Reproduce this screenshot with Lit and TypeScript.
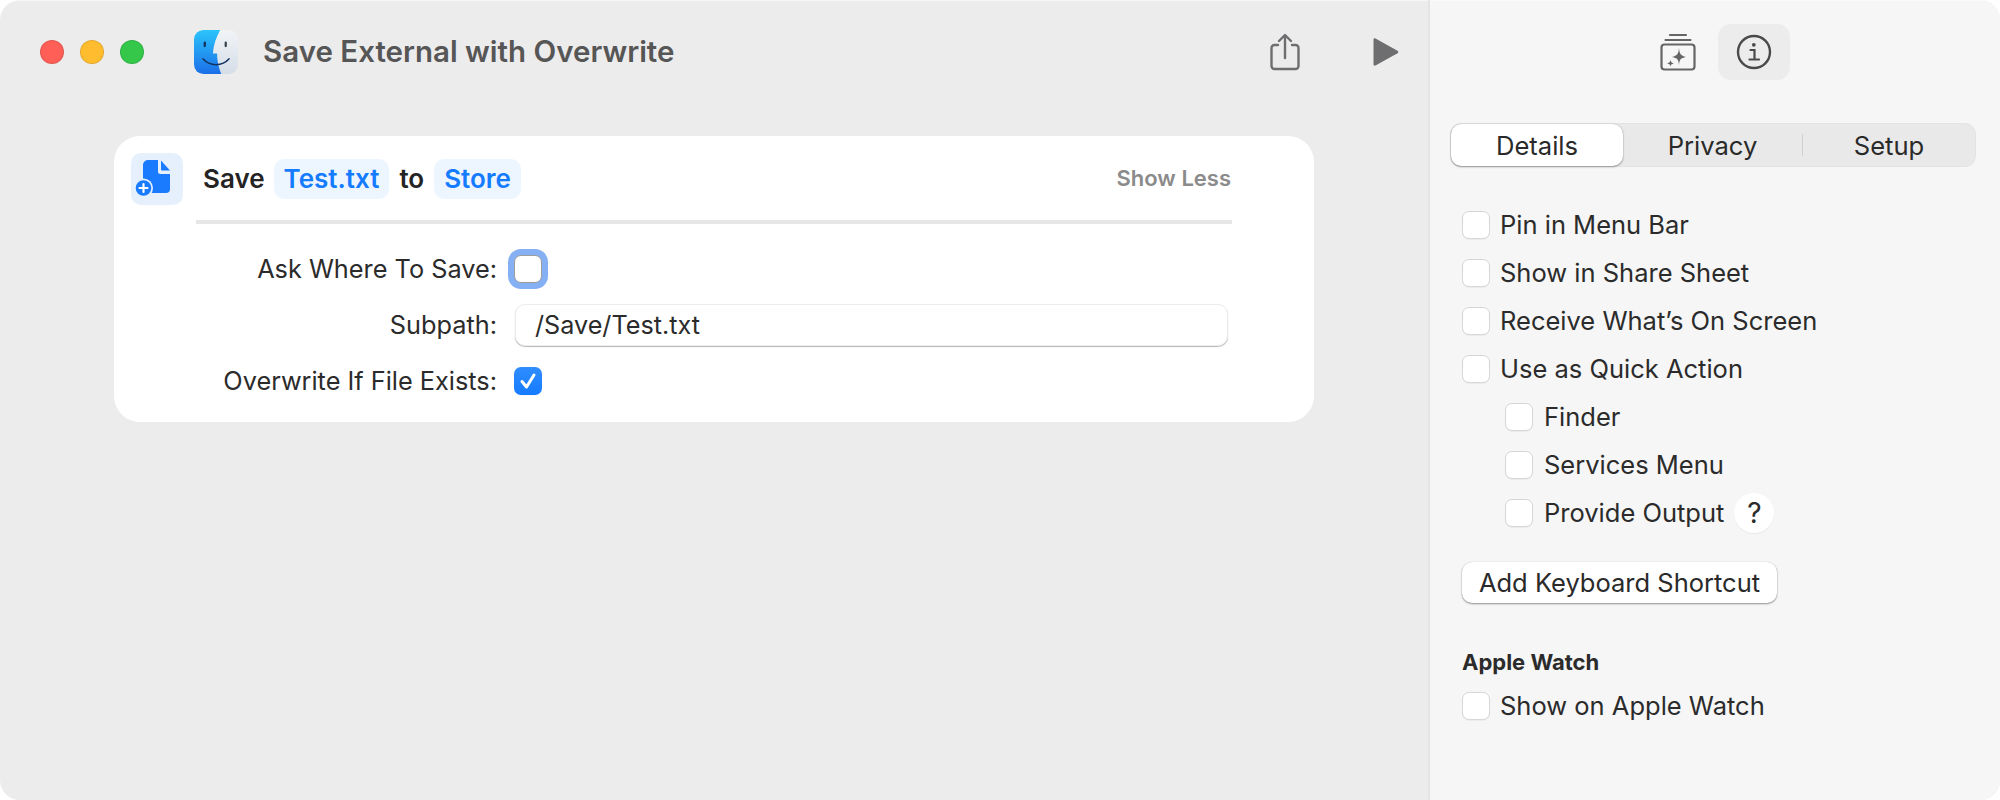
import { LitElement, html, css } from "lit";
import { customElement } from "lit/decorators.js";

@customElement("app-root")
export class AppRoot extends LitElement {
  static styles = css`
    :host { display: block; width: 2000px; height: 800px; background: #fff; font-family: Inter, "Liberation Sans", sans-serif; color: #2a2a2a; overflow: hidden; }
    * { box-sizing: border-box; }
    .window { display: flex; width: 2000px; height: 800px; border-radius: 20px; overflow: hidden; background: #ececec; box-shadow: inset 0 1px 0 #f6f6f6; }
    .main { flex: 0 0 1428px; display: flex; flex-direction: column; }
    .titlebar { height: 104px; flex: none; display: flex; align-items: center; padding: 0 29px 0 40px; }
    .lights { display: flex; gap: 16px; }
    .light { width: 24px; height: 24px; border-radius: 50%; border: 1px solid rgba(0,0,0,0.1); }
    .red { background: #ff5f57; } .yellow { background: #febc2e; } .green { background: #34c749; }
    .finder { margin-left: 50px; width: 44px; height: 44px; flex: none; }
    .title { margin-left: 25px; padding-bottom: 2px; font-size: 29.5px; font-weight: 600; color: #565656; flex: 1; }
    .tb-icon { display: block; flex: none; }
    .share { margin-right: 72px; margin-left: -2px; }
    .card { margin: 32px 0 0 114px; width: 1200px; height: 286px; background: #fff; border-radius: 26px; padding: 17px 65px 0 17px; }
    .head { display: flex; align-items: center; height: 52px; }
    .tile { width: 52px; height: 52px; border-radius: 10px; background: #e6f0fd; flex: none; display: block; }
    .phrase { margin-left: 20px; font-size: 26px; font-weight: 600; display: flex; align-items: center; flex: 1; color: #242424; }
    .pill { background: #edf5ff; color: #157bff; border-radius: 10px; height: 40px; padding: 0 10px 2px; display: flex; align-items: center; }
    .word { padding-bottom: 2px; }
    .first { margin-left: 9px; }
    .mid { margin: 0 10px; padding-bottom: 2px; }
    .less { font-size: 22px; font-weight: 600; color: #8b8b8b; margin-right: 18px; padding-bottom: 2px; }
    .rule { height: 4px; background: #e6e6e6; margin: 15px 0 24px 65px; width: 1036px; }
    .form { display: grid; grid-template-columns: 366px 714px; column-gap: 17px; grid-auto-rows: 42px; row-gap: 14px; align-items: center; }
    .lab { text-align: right; font-size: 25.3px; color: #2b2b2b; padding-bottom: 2px; }
    .input { height: 42px; margin-left: 1px; background: #fff; border-radius: 10px; border: 1px solid #ececec; box-shadow: 0 1px 1px rgba(0,0,0,0.28); font-size: 25.2px; padding-left: 19px; display: flex; align-items: center; color: #2b2b2b; }
    .cb { width: 28px; height: 28px; border-radius: 7px; background: #fff; border: 1px solid #d6d6d6; flex: none; box-shadow: 0 1px 0 rgba(0,0,0,0.04); display: block; }
    .cb.focus { margin-top: -1px; box-shadow: 0 0 0 6px #85b0f3; border-color: #9c9c9c; }
    .cb.on { background: linear-gradient(#2f8dff, #157bff); border: none; }
    .side { flex: 1; background: #f6f6f6; border-left: 2px solid #e4e4e4; padding: 24px 24px 0 20px; display: flex; flex-direction: column; box-shadow: inset 0 1px 0 #fbfbfb; }
    .side-tabs { display: flex; align-items: center; justify-content: center; height: 56px; padding-left: 24px; gap: 22px; }
    .sel { width: 72px; height: 56px; border-radius: 13px; background: #ececec; display: flex; align-items: center; justify-content: center; }
    .seg { margin-top: 43px; height: 44px; width: 526px; background: #e9e9e9; border-radius: 11px; display: flex; align-items: center; font-size: 25.6px; border: 1px solid #e3e3e3; position: relative; }
    .seg > div { display: flex; align-items: center; justify-content: center; height: 100%; }
    .seg .active { width: 172px; background: #fff; border-radius: 10px; box-shadow: 0 1px 2px rgba(0,0,0,0.35), 0 0 1px rgba(0,0,0,0.3); height: 42px; }
    .seg .p { width: 179px; }
    .seg .s { flex: 1; }
    .seg .sep { width: 1px; height: 22px; background: #d0d0d0; }
    .opts { margin-top: 34px; padding-left: 12px; display: flex; flex-direction: column; }
    .row { display: flex; align-items: center; height: 48px; font-size: 25.5px; color: #2b2b2b; }
    .row .cb { margin-right: 10px; }
    .row.in { padding-left: 43px; }
    .row.in .cb { margin-right: 11px; }
    .t { padding-bottom: 2px; }
    .help { width: 40px; height: 40px; border-radius: 50%; background: #fff; margin-left: 10px; display: flex; align-items: center; justify-content: center; font-size: 28px; box-shadow: 0 1px 1px rgba(0,0,0,0.06); }
    .btn { margin-top: 25px; height: 41px; width: 315px; background: #fff; border-radius: 10px; box-shadow: 0 1px 2px rgba(0,0,0,0.4), 0 0 1px rgba(0,0,0,0.2); font-size: 25.5px; display: flex; align-items: center; justify-content: center; }
    .h { margin-top: 46px; font-size: 22px; font-weight: 700; color: #2b2b2b; line-height: 26px; }
    .watch { margin-top: 7px; }
  `;

  private cb(cls = "") {
    return html`<span class="cb ${cls}"></span>`;
  }

  private row(label: string, indent = false) {
    return html`<div class="row ${indent ? "in" : ""}">${this.cb()}<span class="t">${label}</span></div>`;
  }

  render() {
    return html`
      <div class="window">
        <div class="main">
          <div class="titlebar">
            <div class="lights">
              <div class="light red"></div><div class="light yellow"></div><div class="light green"></div>
            </div>
            <svg class="finder" viewBox="0 0 42 42">
              <defs>
                <linearGradient id="fb" x1="0" y1="0" x2="0" y2="1"><stop offset="0" stop-color="#2bc4fb"/><stop offset="1" stop-color="#1b6fe8"/></linearGradient>
                <linearGradient id="fl" x1="0" y1="0" x2="0" y2="1"><stop offset="0" stop-color="#f2f4f6"/><stop offset="1" stop-color="#d4dde8"/></linearGradient>
                <clipPath id="fc"><rect x="0" y="0" width="42" height="42" rx="9"/></clipPath>
              </defs>
              <g clip-path="url(#fc)">
                <rect width="42" height="42" fill="url(#fl)"/>
                <path d="M0 0H25C21 7 18.5 15 18 22.5H22C22 29 23.5 36 26 42H0Z" fill="url(#fb)"/>
              </g>
              <rect x="9.2" y="11" width="2.2" height="5.4" rx="1.1" fill="#14325e"/>
              <rect x="29.2" y="11" width="2.2" height="5.4" rx="1.1" fill="#3a4650"/>
              <path d="M8.5 27.5C15 35 27 35 33.5 27.5" fill="none" stroke="#14325e" stroke-width="1.4" stroke-linecap="round"/>
            </svg>
            <div class="title">Save External with Overwrite</div>
            <svg class="tb-icon share" width="32" height="38" viewBox="0 0 32 38" fill="none" stroke="#6e6e70" stroke-width="2.4" stroke-linecap="round" stroke-linejoin="round">
              <path d="M9 12H5.5A3 3 0 0 0 2.5 15V33A3 3 0 0 0 5.5 36H26.5A3 3 0 0 0 29.5 33V15A3 3 0 0 0 26.5 12H23"/>
              <path d="M16 25V2.5M10 8L16 2L22 8"/>
            </svg>
            <svg class="tb-icon" width="26" height="30" viewBox="0 0 26 30"><path d="M2.5 1.5C1.3 1 0.5 1.8 0.5 3V27C0.5 28.2 1.3 29 2.5 28.5L24.5 16.2C25.6 15.5 25.6 14.5 24.5 13.8Z" fill="#6e6e70"/></svg>
          </div>
          <div class="card">
            <div class="head">
              <svg class="tile" viewBox="0 0 52 52">
                <path d="M17 7H27V18.5A2.5 2.5 0 0 0 29.5 21H39V36A4 4 0 0 1 35 40H16A4 4 0 0 1 12 36V12A5 5 0 0 1 17 7Z" fill="#1a7bff"/>
                <path d="M30 7.5L39 17.5H31A1 1 0 0 1 30 16.5Z" fill="#1a7bff"/>
                <circle cx="12.5" cy="35" r="9.5" fill="#e6f0fd"/>
                <circle cx="12.5" cy="35" r="7.8" fill="#1a7bff"/>
                <path d="M8.5 35H16.5M12.5 31V39" stroke="#fff" stroke-width="2.2" stroke-linecap="round"/>
              </svg>
              <div class="phrase">
                <span class="word">Save</span>
                <span class="pill first">Test.txt</span>
                <span class="mid">to</span>
                <span class="pill">Store</span>
              </div>
              <div class="less">Show Less</div>
            </div>
            <div class="rule"></div>
            <div class="form">
              <div class="lab">Ask Where To Save:</div>
              <div>${this.cb("focus")}</div>
              <div class="lab">Subpath:</div>
              <div class="input">/Save/Test.txt</div>
              <div class="lab">Overwrite If File Exists:</div>
              <div>
                <svg class="cb on" viewBox="0 0 28 28">
                  <path d="M8 14.5L12.5 20L20 8" fill="none" stroke="#fff" stroke-width="3" stroke-linecap="round" stroke-linejoin="round"/>
                </svg>
              </div>
            </div>
          </div>
        </div>
        <div class="side">
          <div class="side-tabs">
            <svg width="36" height="38" viewBox="0 0 36 38" fill="none" stroke="#656565" stroke-width="2.2" stroke-linecap="round">
              <path d="M10 2H26M5.5 7H30.5"/>
              <rect x="1.5" y="11.5" width="33" height="25" rx="3"/>
              <path d="M19 15C19.6 21 20.5 22.4 26 24C20.5 25 19.6 26.4 19 32C18.4 26.4 17.5 25 12 24C17.5 22.4 18.4 21 19 15Z" fill="#656565" stroke="none"/>
              <path d="M10.5 26.5C10.8 29 11.2 29.5 14 30.5C11.2 31 10.8 31.7 10.5 34C10.2 31.7 9.8 31 7 30.5C9.8 29.5 10.2 29 10.5 26.5Z" fill="#656565" stroke="none"/>
            </svg>
            <div class="sel">
              <svg width="36" height="36" viewBox="0 0 36 36" fill="none" stroke="#4a4a4a" stroke-width="2.4" stroke-linecap="round">
                <circle cx="18" cy="18" r="16"/>
                <path d="M14.5 16H18.5V25M13.5 25.5H23" stroke-width="2.2"/>
                <circle cx="17.8" cy="10.8" r="1.9" fill="#4a4a4a" stroke="none"/>
              </svg>
            </div>
          </div>
          <div class="seg">
            <div class="active">Details</div>
            <div class="p">Privacy</div>
            <div class="sep"></div>
            <div class="s">Setup</div>
          </div>
          <div class="opts">
            ${this.row("Pin in Menu Bar")}
            ${this.row("Show in Share Sheet")}
            ${this.row("Receive What’s On Screen")}
            ${this.row("Use as Quick Action")}
            ${this.row("Finder", true)}
            ${this.row("Services Menu", true)}
            <div class="row in">${this.cb()}<span class="t">Provide Output</span><span class="help">?</span></div>
            <div class="btn">Add Keyboard Shortcut</div>
            <div class="h">Apple Watch</div>
            <div class="watch">${this.row("Show on Apple Watch")}</div>
          </div>
        </div>
      </div>
    `;
  }
}
